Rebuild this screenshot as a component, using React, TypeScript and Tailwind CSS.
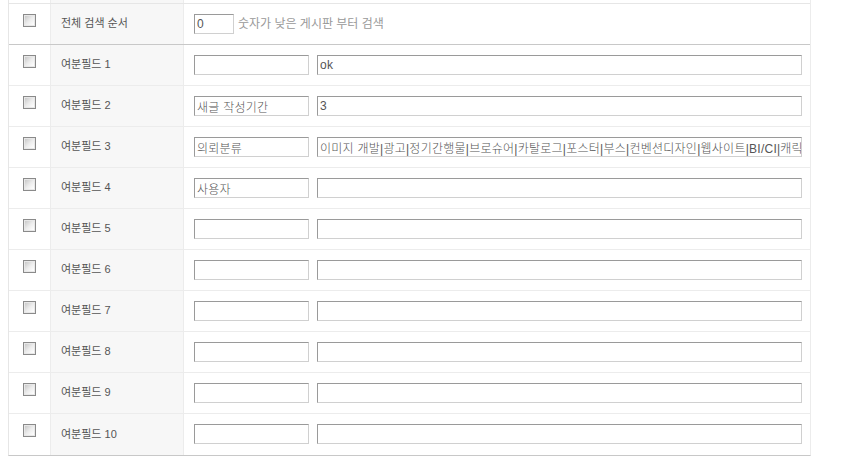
import React from "react";

const font = "font-['Liberation_Sans','Noto_Sans_CJK_KR',sans-serif]";

function Check() {
  return (
    <div className="w-[13px] h-[13px] border border-[#8a8a8a] p-px bg-[#e8e8e8]">
      <div className="w-full h-full bg-gradient-to-br from-[#c9c9c9] via-[#ececec] to-[#ffffff]" />
    </div>
  );
}

function Field({ w, value }: { w: string; value?: string }) {
  return (
    <input
      readOnly
      defaultValue={value ?? ""}
      className={`${w} h-[20px] shrink-0 border border-t-[#9a9a9a] border-l-[#9a9a9a] border-r-[#d0d0d0] border-b-[#d0d0d0] bg-white pl-[2px] text-[12px] tracking-[0.25px] font-light text-[#555] outline-none ${font}`}
    />
  );
}

const rows: [string, string, string][] = [
  ["여분필드 1", "", "ok"],
  ["여분필드 2", "새글 작성기간", "3"],
  [
    "여분필드 3",
    "의뢰분류",
    "이미지 개발|광고|정기간행물|브로슈어|카탈로그|포스터|부스|컨벤션디자인|웹사이트|BI/CI|캐릭터|일러스트|기타",
  ],
  ["여분필드 4", "사용자", ""],
  ["여분필드 5", "", ""],
  ["여분필드 6", "", ""],
  ["여분필드 7", "", ""],
  ["여분필드 8", "", ""],
  ["여분필드 9", "", ""],
  ["여분필드 10", "", ""],
];

export default function App() {
  return (
    <div className={`w-[842px] h-[466px] bg-white ${font}`}>
      <div className="ml-[8px] w-[803px] border-l border-r border-l-[#e6e6e6] border-r-[#ececec] border-b border-b-[#c8c8c8]">
        {/* partial row above */}
        <div className="flex h-[4px] border-b border-[#e6e6e6]">
          <div className="w-[42px] border-r border-[#ececec]" />
          <div className="w-[133px] border-r border-[#ececec] bg-[#f7f7f7]" />
          <div className="flex-1" />
        </div>
        {/* first row */}
        <div className="flex h-[41px] border-b border-[#c8c8c8]">
          <div className="w-[42px] border-r border-[#ececec] flex justify-center pt-[10px]">
            <Check />
          </div>
          <div className="w-[133px] border-r border-[#ececec] bg-[#f7f7f7] flex items-center pl-[10px] pb-[1px] text-[11px] text-[#555]">
            전체 검색 순서
          </div>
          <div className="flex-1 flex items-start pl-[10px] pt-[10px] gap-[4px]">
            <Field w="w-[40px]" value="0" />
            <span className="text-[12px] leading-[20px] text-[#999]">숫자가 낮은 게시판 부터 검색</span>
          </div>
        </div>
        {rows.map(([label, a, b], i) => (
          <div
            key={label}
            className={`flex h-[41px] ${i < rows.length - 1 ? "border-b border-[#ececec]" : ""}`}
          >
            <div className="w-[42px] border-r border-[#ececec] flex justify-center pt-[10px]">
              <Check />
            </div>
            <div className="w-[133px] border-r border-[#ececec] bg-[#f7f7f7] flex items-center pl-[10px] pb-[1px] text-[11px] text-[#555]">
              {label}
            </div>
            <div className="flex-1 flex items-start pl-[10px] pt-[10px] gap-[8px]">
              <Field w="w-[115px]" value={a} />
              <Field w="w-[485px]" value={b} />
            </div>
          </div>
        ))}
      </div>
    </div>
  );
}
